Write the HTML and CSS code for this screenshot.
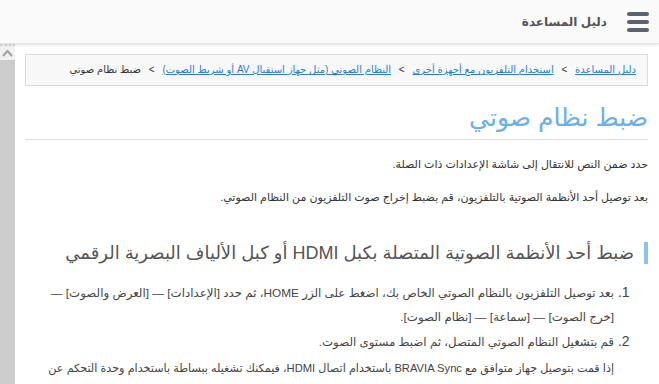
FILE: index.html
```html
<!DOCTYPE html>
<html lang="ar" dir="rtl">
  <head>
    <meta charset="UTF-8" />
    <meta name="viewport" content="width=device-width, initial-scale=1.0" />
    <title>ضبط نظام صوتي</title>
    <link rel="stylesheet" href="styles.css">
  </head>
  <body>
    <header class="topbar">
      <div class="menu-btn">
        <span></span><span></span><span></span>
      </div>
      <div class="site-title">دليل المساعدة</div>
    </header>
    <div class="page">
      <main class="content">
        <nav class="breadcrumb">
          <a href="#">دليل المساعدة</a>
          <span class="sep">&gt;</span>
          <a href="#">استخدام التلفزيون مع أجهزة أخرى</a>
          <span class="sep">&gt;</span>
          <a href="#">النظام الصوتي (مثل جهاز استقبال AV أو شريط الصوت)</a>
          <span class="sep">&gt;</span>
          <span>ضبط نظام صوتي</span>
        </nav>
        <h1 class="page-title">ضبط نظام صوتي</h1>
        <p class="intro">حدد ضمن النص للانتقال إلى شاشة الإعدادات ذات الصلة.</p>
        <p class="intro">بعد توصيل أحد الأنظمة الصوتية بالتلفزيون، قم بضبط إخراج صوت التلفزيون من النظام الصوتي.</p>
        <h2 class="section-title">ضبط أحد الأنظمة الصوتية المتصلة بكبل HDMI أو كبل الألياف البصرية الرقمي</h2>
        <ol class="steps">
          <li>بعد توصيل التلفزيون بالنظام الصوتي الخاص بك، اضغط على الزر HOME، ثم حدد [الإعدادات] — [العرض والصوت] — [خرج الصوت] — [سماعة] — [نظام الصوت].</li>
          <li>قم بتشغيل النظام الصوتي المتصل، ثم اضبط مستوى الصوت.
            <p class="note">إذا قمت بتوصيل جهاز متوافق مع BRAVIA Sync باستخدام اتصال HDMI، فيمكنك تشغيله ببساطة باستخدام وحدة التحكم عن بعد الخاصة بالتلفزيون.</p>
          </li>
        </ol>
      </main>
      <div class="scrollbar">
        <div class="scroll-up">
          <svg width="11" height="8" viewBox="0 0 11 8"><path d="M1 7 L5.5 2 L10 7" fill="none" stroke="#a0a0a0" stroke-width="2"/></svg>
        </div>
        <div class="scroll-track"></div>
      </div>
    </div>
  </body>
</html>
```

FILE: styles.css
```css
* {
  margin: 0;
  padding: 0;
  box-sizing: border-box;
}
html, body {
  height: 100%;
  overflow: hidden;
}
body {
  font-family: "Liberation Sans", "DejaVu Sans", sans-serif;
  background: #fff;
  color: #333;
  display: flex;
  flex-direction: column;
}
.topbar {
  height: 44px;
  flex: none;
  display: flex;
  align-items: center;
  background: #fafafa;
  border-bottom: 1px solid #e4e4e4;
  box-shadow: 0 1px 3px rgba(0, 0, 0, 0.12);
  padding-right: 10px;
  position: relative;
  z-index: 1;
}
.menu-btn {
  width: 22px;
  display: flex;
  flex-direction: column;
  gap: 4px;
  margin-left: 20px;
}
.menu-btn span {
  display: block;
  height: 4px;
  border-radius: 2px;
  background: #5d6271;
}
.site-title {
  font-size: 12px;
  font-weight: bold;
  color: #555;
}
.page {
  flex: 1;
  display: flex;
  min-height: 0;
}
.scrollbar {
  width: 15px;
  flex: none;
  display: flex;
  flex-direction: column;
}
.scroll-up {
  height: 16px;
  background: #f1f1f1;
  border-top: 2px dotted #d8d8d8;
  display: flex;
  justify-content: center;
  align-items: center;
}
.scroll-track {
  flex: 1;
  background: #cdcdcd;
}
.content {
  flex: 1;
  padding: 10px 11px 0 10px;
}
.breadcrumb {
  background: #f8f8f8;
  border: 1px solid #dcdcdc;
  height: 32px;
  padding: 0 11px;
  font-size: 10px;
  line-height: 30px;
  color: #333;
  white-space: nowrap;
}
.breadcrumb a {
  color: #2b7bd6;
}
.breadcrumb .sep {
  margin: 0 5px;
}
.page-title {
  font-size: 25px;
  font-weight: normal;
  color: #6aaeed;
  margin-top: 12px;
  padding-bottom: 3px;
  border-bottom: 1px solid #dddddd;
  line-height: 38px;
}
.intro {
  font-size: 11px;
  margin-top: 15px;
  line-height: 18px;
}
.intro + .intro {
  margin-top: 15px;
}
.section-title {
  font-size: 18px;
  font-weight: normal;
  color: #555;
  border-right: 4px solid #8ec2ee;
  padding-right: 10px;
  margin-top: 36px;
  line-height: 22px;
}
.steps {
  margin-top: 16px;
  padding-right: 34px;
  padding-left: 12px;
  font-size: 11.8px;
  line-height: 24px;
  color: #444;
}
.steps li::marker {
  font-size: 14px;
  font-family: "Liberation Sans", sans-serif;
}
.note {
  font-size: 11.2px;
  margin-top: 2px;
}
```
